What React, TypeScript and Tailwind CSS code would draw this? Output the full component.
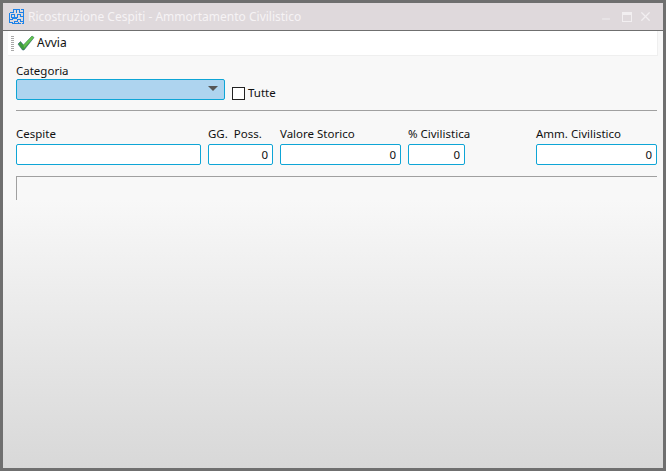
import { X, Minus } from 'lucide-react'

const FONT = "font-['Tahoma','Noto_Sans','Liberation_Sans',sans-serif]"

function NumField({ label, width, value = '0', marginLeft = 'ml-[7px]' }: { label: string; width: string; value?: string; marginLeft?: string }) {
  return (
    <div className={`flex flex-col ${width} ${marginLeft}`}>
      <span className="h-[18px] text-[11.5px] leading-[16px] whitespace-pre text-[#111]">{label}</span>
      <div className="h-[21px] bg-white border border-[#0ea5d6] rounded-[2px] pr-[4px] text-right text-[11.5px] leading-[19px] text-[#111]">
        {value}
      </div>
    </div>
  )
}

function MazeIcon() {
  return (
    <svg width="17" height="17" viewBox="0 0 17 17" fill="none" stroke="#1d82e8" strokeWidth="1" shapeRendering="crispEdges">
      <path d="M1.5 4.5h4v-3h6v3h4v4h-3v-2h-3v3h-3v-3h-3v3h3M1.5 4.5v7h3v-1h4M15.5 8.5v5h-3v-2h-3v2h-3v2h6M1.5 11.5v3h3v1h2M8.5 1.5v3M12.5 1.5h3v3M10.5 13.5v2M13.5 15.5h2v-2" />
    </svg>
  )
}

function CheckIcon() {
  return (
    <svg width="18" height="16" viewBox="0 0 18 16">
      <path d="M1 9l2.5-2.5L6.5 10 15 1l2 1.5L7 15h-1.500z" fill="#3f9d3c" stroke="#2f5f7a" strokeWidth="0.6" />
      <path d="M6.500 10L15 1l2 1.500L7 13z" fill="#62c04f" />
    </svg>
  )
}

export default function App() {
  return (
    <div className={`w-[666px] h-[471px] bg-[#6f6f6f] pt-[3px] pb-[3px] px-[3px] overflow-hidden ${FONT}`}>
      <div className="h-full flex flex-col">
        {/* title bar */}
        <div className="h-[27px] shrink-0 bg-[#dfd9dc] flex items-center pl-[5px]">
          <MazeIcon />
          <span className="ml-[3px] text-[12px] text-[#f6f3f5] whitespace-nowrap">Ricostruzione Cespiti - Ammortamento Civilistico</span>
          <div className="ml-auto flex items-center text-[#f2eff1]">
            <Minus size={12} strokeWidth={1.8} className="mt-[4px]" />
            <div className="ml-[10px] w-[10px] h-[10px] border border-[#f2eff1] border-t-[3px]" />
            <X size={15} strokeWidth={2} className="ml-[6px] mr-[10px]" />
          </div>
        </div>
        <div className="h-px shrink-0 bg-[#6f6f6f]" />

        {/* body */}
        <div className="flex-1 min-h-0 flex flex-col bg-[#f8f8f8]">
          {/* toolbar */}
          <div className="shrink-0 mx-[5px] h-[25px] bg-white border-r border-b border-[#efefef] flex items-center">
            <div className="ml-[3px] w-[3px] h-[15px] bg-[repeating-linear-gradient(to_bottom,#a8a8a8_0,#a8a8a8_1px,transparent_1px,transparent_2px)]" />
            <div className="ml-[3px]"><CheckIcon /></div>
            <span className="ml-[2px] text-[12px] text-[#111]">Avvia</span>
          </div>

          <div className="shrink-0 pl-[13px] pr-[6px] pt-[7px]">
            <div className="h-[15px] text-[11.5px] leading-[15px] text-[#111]">Categoria</div>
            <div className="flex items-end mt-px">
              <div className="w-[209px] h-[21px] bg-[#aed4ef] border border-[#0ea5d6] rounded-[2px] flex items-center justify-end pr-[6px]">
                <div className="w-0 h-0 border-x-[5px] border-x-transparent border-t-[5px] border-t-[#555] mb-[3px]" />
              </div>
              <div className="ml-[7px] w-[13px] h-[13px] bg-white border border-[#222]" />
              <span className="ml-[3px] text-[11.5px] leading-[15px] text-[#111]">Tutte</span>
            </div>
            <div className="h-px bg-[#a0a0a0] mt-[10px]" />

            <div className="flex mt-[15px]">
              <NumField label="Cespite" width="w-[185px]" value="" marginLeft="" />
              <NumField label="GG.  Poss." width="w-[65px]" />
              <NumField label="Valore Storico" width="w-[121px]" />
              <NumField label="% Civilistica" width="w-[57px]" />
              <NumField label="Amm. Civilistico" width="w-[121px]" marginLeft="ml-[71px]" />
            </div>

            <div className="h-[24px] mt-[11px] border-t border-l border-[#a0a0a0]" />
          </div>

          {/* lower fade */}
          <div className="flex-1 min-h-0 bg-gradient-to-b from-[#f8f8f8] to-[#d8d8d8]" />
        </div>
      </div>
    </div>
  )
}
